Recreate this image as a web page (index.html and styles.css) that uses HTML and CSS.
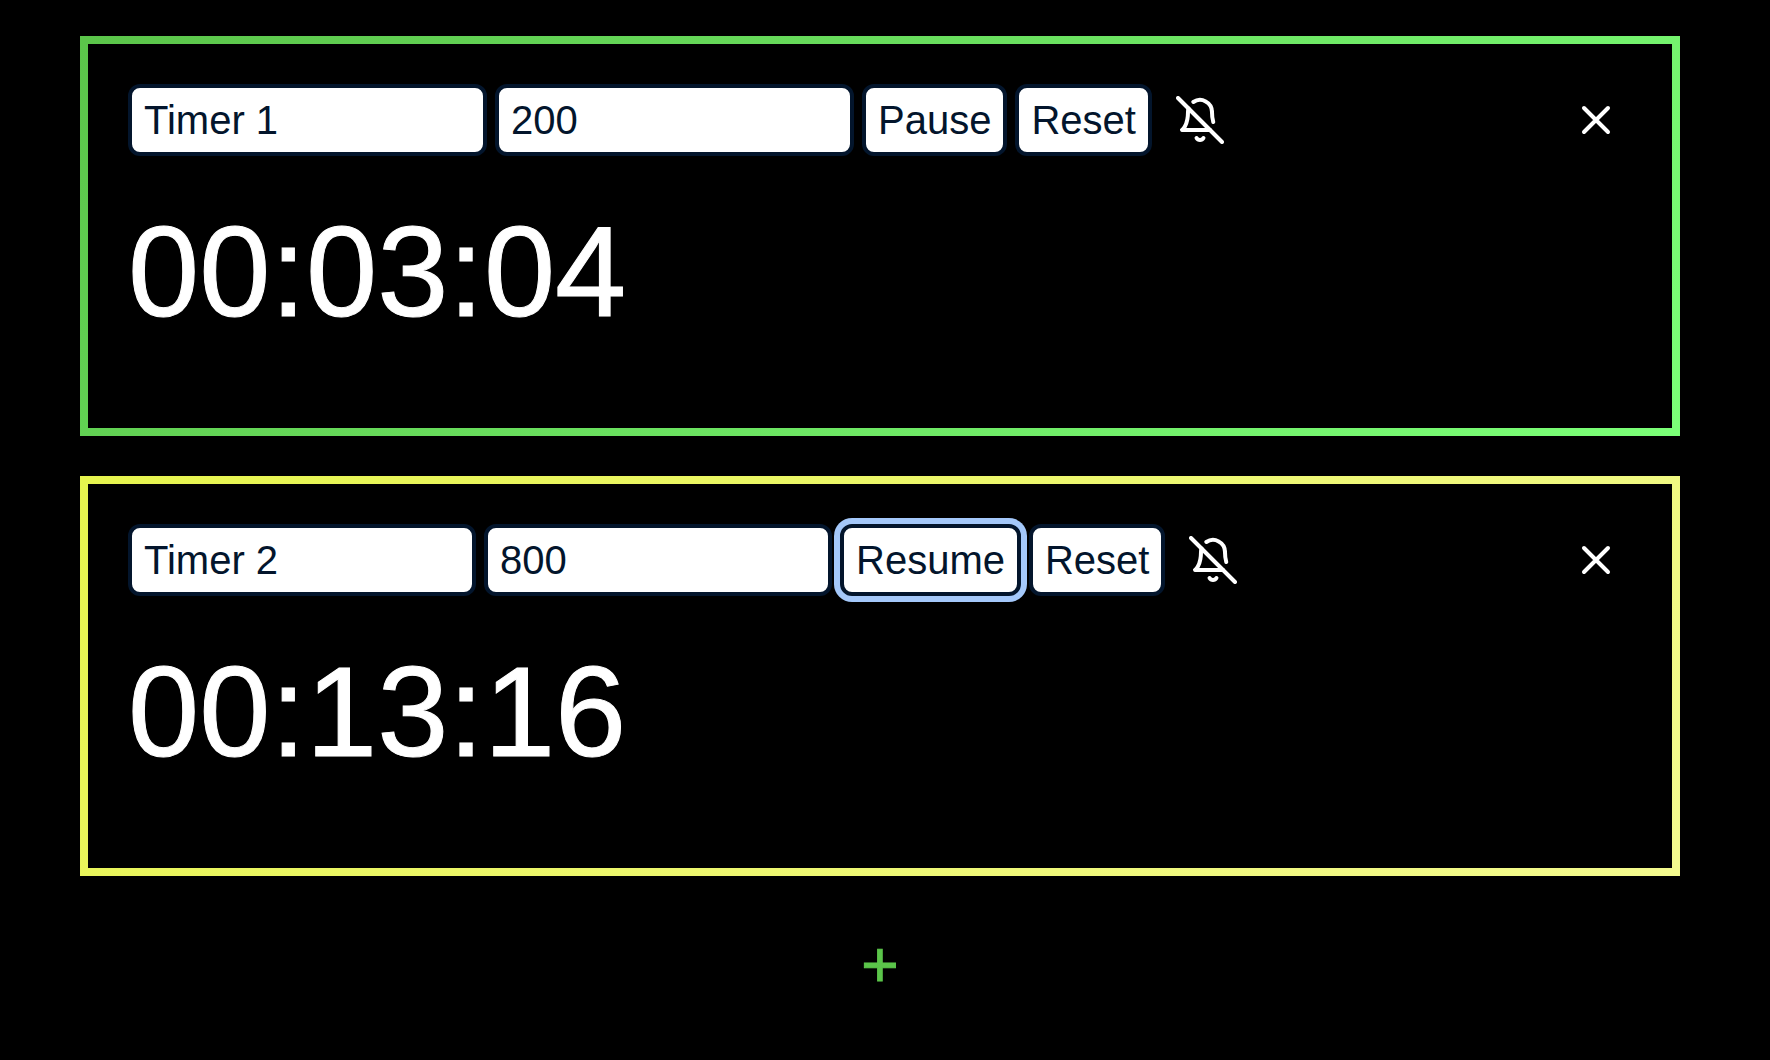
FILE: index.html
```html
<!DOCTYPE html>
<html lang="en">
<head>
<meta charset="utf-8">
<meta name="viewport" content="width=device-width, initial-scale=1">
<title>Timers</title>
<link rel="stylesheet" href="styles.css">
</head>
<body>
<svg class="sprite" aria-hidden="true">
  <symbol id="bell-off" viewBox="0 0 24 24">
    <path d="M13.73 21a2 2 0 0 1-3.46 0"/>
    <path d="M18.63 13A17.89 17.89 0 0 1 18 8"/>
    <path d="M6.26 6.26A5.86 5.86 0 0 0 6 8c0 7-3 9-3 9h14"/>
    <path d="M18 8a6 6 0 0 0-9.33-5"/>
    <path d="M1 1l22 22"/>
  </symbol>
  <symbol id="close" viewBox="0 0 24 24">
    <path d="M18 6L6 18M6 6l12 12"/>
  </symbol>
</svg>
<main class="timers">
  <section class="timer timer--running">
    <div class="toolbar">
      <input class="control field" type="text" value="Timer 1" aria-label="Timer name">
      <input class="control field" type="text" inputmode="numeric" value="200" aria-label="Seconds">
      <button class="control" type="button">Pause</button>
      <button class="control" type="button">Reset</button>
      <button class="icon-button" type="button" aria-label="Unmute alarm"><svg class="icon"><use href="#bell-off"/></svg></button>
      <button class="icon-button icon-button--close" type="button" aria-label="Remove timer"><svg class="icon"><use href="#close"/></svg></button>
    </div>
    <div class="time" role="timer">00:03:04</div>
  </section>
  <section class="timer timer--paused">
    <div class="toolbar">
      <input class="control field" type="text" value="Timer 2" aria-label="Timer name">
      <input class="control field" type="text" inputmode="numeric" value="800" aria-label="Seconds">
      <button class="control control--active" type="button">Resume</button>
      <button class="control" type="button">Reset</button>
      <button class="icon-button" type="button" aria-label="Unmute alarm"><svg class="icon"><use href="#bell-off"/></svg></button>
      <button class="icon-button icon-button--close" type="button" aria-label="Remove timer"><svg class="icon"><use href="#close"/></svg></button>
    </div>
    <div class="time" role="timer">00:13:16</div>
  </section>
  <button class="add" type="button" aria-label="Add timer">+</button>
</main>
</body>
</html>
```
FILE: styles.css
```css
* {
  box-sizing: border-box;
}

body {
  margin: 0;
  background: #000;
  color: #fff;
  font-family: "Liberation Sans", Arial, Helvetica, sans-serif;
}

.sprite {
  display: none;
}

.timers {
  display: flex;
  flex-direction: column;
  gap: 40px;
  padding: 36px 90px 36px 80px;
}

.timer {
  min-height: 400px;
  padding: 40px;
  border: 8px solid;
}

.timer--running {
  border-image: linear-gradient(135deg, #5bc54a, #7bff77) 1;
}

.timer--paused {
  border-image: linear-gradient(135deg, #e6f44e, #f3fa8e) 1;
}

.toolbar {
  display: flex;
  align-items: center;
  gap: 8px;
}

.control {
  height: 72px;
  padding: 0 12px;
  border: 4px solid #03152c;
  border-radius: 12px;
  background: #fff;
  color: #03152c;
  font: inherit;
  font-size: 40px;
}

.field {
  width: 359px;
  min-width: 0;
}

.timer--paused .field {
  width: 348px;
}

.control--active {
  box-shadow: 0 0 0 6px #a4c8fa;
}

.icon-button {
  display: flex;
  padding: 12px 16px;
  border: 0;
  background: none;
  color: #fff;
}

.icon-button--close {
  margin-left: auto;
  margin-right: -4px;
}

.icon {
  width: 48px;
  height: 48px;
  overflow: visible;
  fill: none;
  stroke: currentColor;
  stroke-width: 2;
  stroke-linecap: round;
  stroke-linejoin: round;
}

.time {
  margin-top: 36px;
  font-size: 128px;
  line-height: 160px;
  -webkit-text-stroke: 1px currentColor;
}

.add {
  align-self: center;
  padding: 0 12px;
  border: 0;
  background: none;
  color: #5bc54a;
  font: inherit;
  font-size: 64px;
  line-height: 98px;
  -webkit-text-stroke: 1px currentColor;
}
```
